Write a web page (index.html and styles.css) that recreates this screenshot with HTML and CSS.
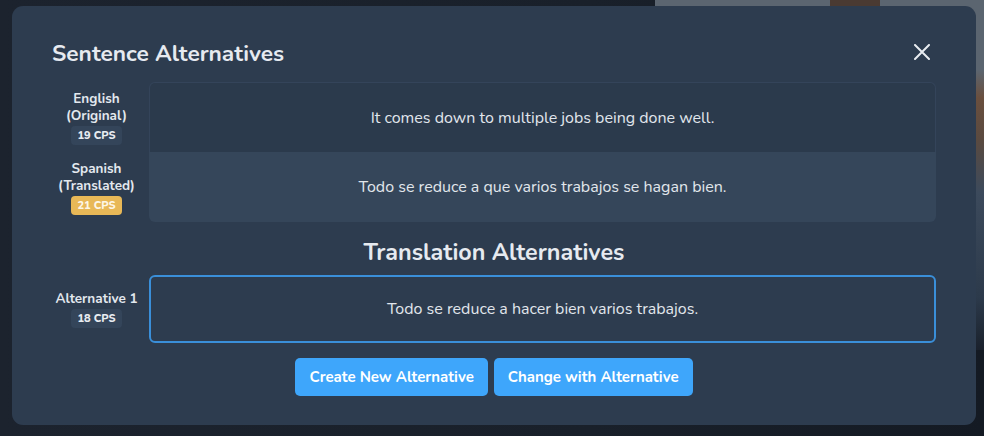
FILE: index.html
```html
<!DOCTYPE html>
<html>
<head>
<meta charset="utf-8">
<link rel="stylesheet" href="styles.css">
</head>
<body>
<div class="backdrop">
  <div class="bg-photo"></div>
  <div class="bg-face"></div>
  <div class="modal">
    <div class="modal-head">
      <h2 class="title">Sentence Alternatives</h2>
      <button class="close" aria-label="Close">
        <svg width="16" height="16" viewBox="0 0 16 16"><path d="M1 1 L15 15 M15 1 L1 15" stroke="#e8ecf1" stroke-width="2" stroke-linecap="round"/></svg>
      </button>
    </div>
    <div class="pair">
      <div class="label">
        <div class="lang">English</div>
        <div class="lang">(Original)</div>
        <span class="cps">19 CPS</span>
      </div>
      <div class="cell cell-top">It comes down to multiple jobs being done well.</div>
      <div class="label">
        <div class="lang">Spanish</div>
        <div class="lang">(Translated)</div>
        <span class="cps warn">21 CPS</span>
      </div>
      <div class="cell cell-bottom">Todo se reduce a que varios trabajos se hagan bien.</div>
    </div>
    <h3 class="subtitle">Translation Alternatives</h3>
    <div class="alt-row">
      <div class="label">
        <div class="lang">Alternative 1</div>
        <span class="cps">18 CPS</span>
      </div>
      <div class="alt-box">Todo se reduce a hacer bien varios trabajos.</div>
    </div>
    <div class="actions">
      <button class="btn">Create New Alternative</button>
      <button class="btn">Change with Alternative</button>
    </div>
  </div>
</div>
</body>
</html>
```
FILE: styles.css
```css
* { box-sizing: border-box; }
html, body { margin: 0; height: 100%; }
body {
  background: #1a212c;
  font-family: "Nunito", "Lato", "Noto Sans", sans-serif;
  color: #e3e8ee;
  overflow: hidden;
}
.backdrop {
  position: relative;
  width: 984px;
  height: 436px;
  padding: 6px 8px 0 12px;
  background: linear-gradient(90deg, #1c232e 0%, #19202a 60%, #141a23 100%);
}
.bg-photo {
  position: absolute;
  left: 655px;
  top: 0;
  width: 329px;
  height: 350px;
  background: linear-gradient(180deg, #5b6570 0%, #5b6570 20%, #6a4f3e 28%, #5a4a40 40%, #3c4a5c 55%, #2c3a4b 85%, #1a212c 100%);
}
.bg-face {
  position: absolute;
  left: 830px;
  top: 0;
  width: 50px;
  height: 6px;
  background: #4a3a32;
}
.modal {
  position: relative;
  height: 419px;
  background: #2d3c4f;
  border-radius: 11px;
  padding: 30px 40px 0 40px;
}
.modal-head {
  display: flex;
  align-items: center;
  justify-content: space-between;
  height: 34px;
  margin-bottom: 12px;
}
.title {
  margin: 0;
  font-size: 22.7px;
  font-weight: 700;
  color: #e6eaf0;
}
.close {
  background: none;
  border: 0;
  padding: 0;
  margin-right: 6px;
  margin-top: -2px;
  display: flex;
  cursor: pointer;
}
.pair {
  display: grid;
  grid-template-columns: 89px 1fr;
  column-gap: 8px;
}
.label {
  display: flex;
  flex-direction: column;
  align-items: center;
  justify-content: center;
  text-align: center;
}
.lang {
  font-size: 13.5px;
  font-weight: 700;
  line-height: 17px;
  color: #e3e8ee;
  white-space: nowrap;
}
.cps {
  margin-top: 2px;
  display: inline-block;
  background: #34455a;
  color: #e8ecf1;
  font-size: 11px;
  font-weight: 800;
  line-height: 13px;
  padding: 3px 6px;
  border-radius: 4px;
}
.cps.warn { background: #e8b857; color: #fdf6e6; }
.cell {
  display: flex;
  align-items: center;
  justify-content: center;
  height: 70px;
  font-size: 16px;
  color: #e1e6ec;
}
.cell-top {
  background: #2b3a4c;
  border: 1px solid #34445a;
  border-bottom: 0;
  border-radius: 6px 6px 0 0;
}
.cell-bottom {
  background: #35465a;
  border-radius: 0 0 6px 6px;
}
.subtitle {
  margin: 0;
  text-align: center;
  font-size: 23.3px;
  font-weight: 700;
  color: #e6eaf0;
  height: 53px;
  line-height: 60px;
}
.alt-row {
  display: grid;
  grid-template-columns: 89px 1fr;
  column-gap: 8px;
}
.alt-box {
  height: 68px;
  border: 2px solid #3a8fd9;
  border-radius: 6px;
  display: flex;
  align-items: center;
  justify-content: center;
  font-size: 16px;
  color: #e1e6ec;
}
.actions {
  display: flex;
  justify-content: center;
  gap: 6px;
  margin-top: 15px;
}
.btn {
  background: #3ea6fb;
  border: 0;
  border-radius: 5px;
  height: 38px;
  padding: 0 14px;
  color: #ffffff;
  font-family: inherit;
  font-size: 15px;
  font-weight: 700;
  cursor: pointer;
}
```
